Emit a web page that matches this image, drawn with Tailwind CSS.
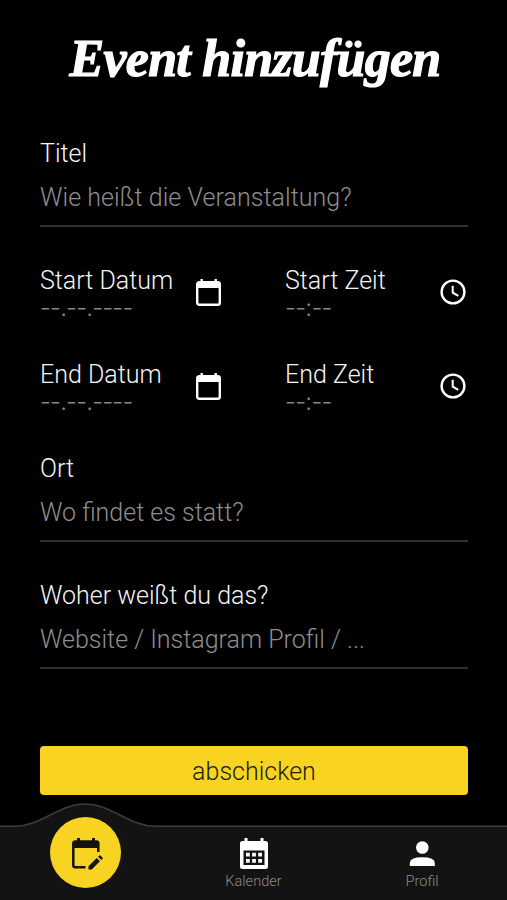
<!DOCTYPE html>
<html lang="de">
<head>
<meta charset="utf-8">
<title>Event hinzufügen</title>
<script src="https://cdn.jsdelivr.net/npm/@tailwindcss/browser@4"></script>
</head>
<body class="bg-black">
<div class="flex h-[900px] w-[507px] flex-col overflow-hidden bg-black font-['Roboto',sans-serif] text-[25px] font-light leading-[34px] text-[#f5f5f5]">
  <h1 class="flex h-[137px] justify-center pl-[3px] pt-[29px] font-['Liberation_Serif',serif] text-[52px] font-bold italic leading-[60px] tracking-[-0.75px] whitespace-nowrap text-white [-webkit-text-stroke:1.2px_white]"><span>Event hinzufügen</span></h1>
  <main class="flex h-[658px] flex-col pl-10 pr-[39px]">
    <label class="flex h-[90px] flex-col border-b-2 border-[#303030]">
      <span>Titel</span>
      <span class="mt-2.5 tracking-[0.06px] text-[#8e8e8e]">Wie heißt die Veranstaltung?</span>
    </label>
    <div class="mt-[37px] grid grid-cols-[245px_183px] gap-y-[38px]">
      <div class="flex h-14 justify-between pr-[62px]">
        <div><div>Start Datum</div><div class="-mt-0.5 font-['Inter'] text-[24px] leading-6 tracking-[-0.8px] text-[#888]">--.--.----</div></div>
        <svg class="mt-[13px] h-[31px] w-[29px]" viewBox="0 0 29 31" fill="none"><rect x="3.2" y="5.2" width="22.6" height="22.6" rx="2" stroke="white" stroke-width="2.4"/><path d="M3 5h23v6H3zM6.5 2h2.4v4H6.5zM20.5 2h2.4v4h-2.4z" fill="white"/></svg>
      </div>
      <div class="flex h-14 justify-between">
        <div><div>Start Zeit</div><div class="-mt-0.5 font-['Inter'] text-[24px] leading-6 tracking-[-0.7px] text-[#888]">--:--</div></div>
        <svg class="mt-[13px] size-[30px]" viewBox="0 0 30 30" fill="none" stroke="white" stroke-width="2.4"><circle cx="15" cy="15" r="11.4"/><path d="M14.7 8.8v6.8l5.6 3.3" stroke-width="2"/></svg>
      </div>
      <div class="flex h-14 justify-between pr-[62px]">
        <div><div>End Datum</div><div class="-mt-0.5 font-['Inter'] text-[24px] leading-6 tracking-[-0.8px] text-[#888]">--.--.----</div></div>
        <svg class="mt-[13px] h-[31px] w-[29px]" viewBox="0 0 29 31" fill="none"><rect x="3.2" y="5.2" width="22.6" height="22.6" rx="2" stroke="white" stroke-width="2.4"/><path d="M3 5h23v6H3zM6.5 2h2.4v4H6.5zM20.5 2h2.4v4h-2.4z" fill="white"/></svg>
      </div>
      <div class="flex h-14 justify-between">
        <div><div>End Zeit</div><div class="-mt-0.5 font-['Inter'] text-[24px] leading-6 tracking-[-0.7px] text-[#888]">--:--</div></div>
        <svg class="mt-[13px] size-[30px]" viewBox="0 0 30 30" fill="none" stroke="white" stroke-width="2.4"><circle cx="15" cy="15" r="11.4"/><path d="M14.7 8.8v6.8l5.6 3.3" stroke-width="2"/></svg>
      </div>
    </div>
    <label class="mt-[38px] flex h-[90px] flex-col border-b-2 border-[#303030]">
      <span>Ort</span>
      <span class="mt-2.5 text-[#8e8e8e]">Wo findet es statt?</span>
    </label>
    <label class="mt-[37px] flex h-[90px] flex-col border-b-2 border-[#303030]">
      <span>Woher weißt du das?</span>
      <span class="mt-2.5 text-[#8e8e8e]">Website / Instagram Profil / ...</span>
    </label>
    <button class="mt-auto h-[49px] w-full rounded-[4px] bg-[#f8d321] pt-0.5 text-[#211d0c]">abschicken</button>
  </main>
  <nav class="relative grid h-[105px] grid-cols-[170px_167px_170px] pt-[30px] text-[14.6px] leading-5 text-[#8a8a8a]">
    <svg class="absolute inset-0 h-[105px] w-[507px]" viewBox="0 0 507 105" fill="none"><path d="M0 31.3H14C42 31.3 58 9 85 9S128 31.3 156 31.3H507V105H0Z" fill="#131313"/><path d="M0 31.3H14C42 31.3 58 9 85 9S128 31.3 156 31.3H507" stroke="#3c3c3c" stroke-width="1.6"/></svg>
    <a class="relative -mt-[8px] ml-[50px] flex size-[71px] items-center justify-center rounded-full bg-[#f8d321]">
      <svg class="size-[36px]" viewBox="0 0 36 36" fill="none"><path d="M17.5 32.2H7.3Q5.3 32.2 5.3 30.2V8.5Q5.3 6.5 7.3 6.5H28.3Q30.3 6.5 30.3 8.5V17" stroke="#15130c" stroke-width="2.5"/><path d="M5 6h26v7H5zM9 3h3v5H9zM24 3h3v5h-3z" fill="#15130c"/><path d="m20.5 31.2 8.2-8.2 3.2 3.2-8.2 8.2h-3.2zM30 21.8l1.1-1.1q.7-.7 1.4 0l1.9 1.9q.7.7 0 1.4l-1.1 1.1z" fill="#15130c"/></svg>
    </a>
    <a class="relative flex flex-col items-center">
      <svg class="mt-[12px] h-[34px] w-[30px]" viewBox="0 0 30 34" fill="white"><path fill-rule="evenodd" d="M3.5 4H5.5V1H8.5V4H21.5V1H24.5V4H26.5Q29 4 29 6.5V29.5Q29 32 26.5 32H3.5Q1 32 1 29.5V6.5Q1 4 3.5 4ZM4.5 13.5V28H25.5V13.5Z"/><path d="M7 15.8h3.8v3.8H7zM13.1 15.8h3.8v3.8h-3.8zM19.2 15.8H23v3.8h-3.8zM7 21.9h3.8v3.8H7zM13.1 21.9h3.8v3.8h-3.8zM19.2 21.9H23v3.8h-3.8z"/></svg>
      <span>Kalender</span>
    </a>
    <a class="relative flex flex-col items-center">
      <svg class="mt-[14px] h-[32px] w-[30px]" viewBox="0 0 30 32" fill="white"><circle cx="15.3" cy="8.5" r="6.3"/><path d="M2.8 27v-3q0-5.8 12.5-5.8t12.5 5.8v3z"/></svg>
      <span>Profil</span>
    </a>
  </nav>
</div>
</body>
</html>
